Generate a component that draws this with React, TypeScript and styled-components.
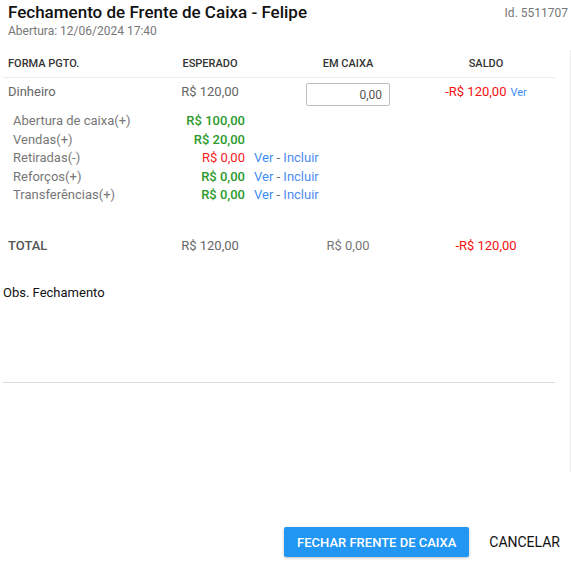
import * as React from "react";
import styled, { createGlobalStyle } from "styled-components";

const Global = createGlobalStyle`
  html, body {
    margin: 0;
    padding: 0;
    background: #fff;
  }
  body {
    font-family: Roboto, "Liberation Sans", sans-serif;
  }
`;

const Dialog = styled.div`
  width: 571px;
  height: 563px;
  display: flex;
  flex-direction: column;
  box-sizing: border-box;
`;

const Head = styled.div`
  height: 22px;
  box-sizing: border-box;
  display: flex;
  justify-content: space-between;
  align-items: flex-start;
  padding: 2px 3px 0 8px;
`;

const Title = styled.h1`
  margin: 0;
  font-size: 17px;
  font-weight: 500;
  line-height: 20px;
  color: #111;
`;

const IdText = styled.span`
  margin-top: 1px;
  font-size: 12px;
  line-height: 20px;
  color: #777;
`;

const Opened = styled.div`
  padding-left: 8px;
  font-size: 12px;
  line-height: 18px;
  color: #777;
`;

const Body = styled.div`
  margin-top: 10px;
  height: 422px;
  box-sizing: border-box;
  padding: 0 15px 0 3px;
  border-right: 1px solid #ececec;
  display: flex;
  flex-direction: column;
`;

const Grid = styled.div`
  display: grid;
  grid-template-columns: repeat(4, 1fr);
`;

const HeadRow = styled(Grid)`
  height: 27px;
  align-items: center;
  border-bottom: 1px solid #ececec;
`;

const HeadCell = styled.div<{ $left?: boolean }>`
  font-size: 11px;
  font-weight: 500;
  color: #333;
  text-align: ${(p) => (p.$left ? "left" : "center")};
  padding-left: ${(p) => (p.$left ? "5px" : "0")};
`;

const Row = styled(Grid)`
  padding-top: 5px;
  align-items: start;
`;

const Cell = styled.div<{ $left?: boolean; $color?: string; $bold?: boolean }>`
  font-size: 13px;
  line-height: 18px;
  color: ${(p) => p.$color || "#666"};
  font-weight: ${(p) => (p.$bold ? 500 : 400)};
  text-align: ${(p) => (p.$left ? "left" : "center")};
  padding-left: ${(p) => (p.$left ? "5px" : "0")};
`;

const InputCell = styled.div`
  display: flex;
  justify-content: center;
`;

const MoneyInput = styled.input`
  width: 84px;
  height: 23px;
  box-sizing: border-box;
  border: 1px solid #bdbdbd;
  border-radius: 2px;
  padding: 0 7px;
  text-align: right;
  font-family: inherit;
  font-size: 12px;
  color: #555;
  outline: none;
`;

const SmallLink = styled.a`
  font-size: 11px;
  color: #3d8ef0;
  margin-left: 4px;
  cursor: pointer;
`;

const Details = styled.div`
  margin-top: 6px;
  padding-left: 10px;
  display: grid;
  grid-template-columns: 162px 61px auto;
  column-gap: 9px;
  font-size: 13px;
  line-height: 18.5px;
`;

const DLabel = styled.span`
  color: #777;
`;

const DValue = styled.span<{ $neg?: boolean }>`
  color: ${(p) => (p.$neg ? "#f52020" : "#2c9a2c")};
  text-align: right;
  font-weight: ${(p) => (p.$neg ? 400 : 500)};
`;

const Actions = styled.span`
  color: #666;
`;

const Link = styled.a<{ $alt?: boolean }>`
  color: ${(p) => (p.$alt ? "#4f8cf2" : "#3d8ef0")};
  cursor: pointer;
`;

const TotalRow = styled(Row)`
  margin-top: 32.5px;
  padding-top: 0;
`;

const ObsLabel = styled.div`
  margin-top: 29px;
  font-size: 13px;
  line-height: 18px;
  color: #111;
`;

const ObsArea = styled.div`
  height: 80px;
  border-bottom: 1px solid #dcdcdc;
`;

const Footer = styled.div`
  margin-top: auto;
  display: flex;
  justify-content: flex-end;
  align-items: center;
  gap: 8px;
  padding: 0 3px 6px 0;
`;

const Primary = styled.button`
  height: 30px;
  width: 185px;
  border: none;
  border-radius: 2px;
  background: #2196f3;
  color: #fff;
  font-family: inherit;
  font-size: 13px;
  font-weight: 500;
  text-transform: uppercase;
  box-shadow: 0 1px 3px rgba(0, 0, 0, 0.25);
  cursor: pointer;
`;

const Flat = styled.button`
  height: 30px;
  padding: 0 8px 0 12px;
  border: none;
  background: transparent;
  color: #111;
  font-family: inherit;
  font-size: 14px;
  text-transform: uppercase;
  cursor: pointer;
`;

const details = [
  { label: "Abertura de caixa(+)", value: "R$ 100,00" },
  { label: "Vendas(+)", value: "R$ 20,00" },
  { label: "Retiradas(-)", value: "R$ 0,00", neg: true, links: true },
  { label: "Reforços(+)", value: "R$ 0,00", links: true },
  { label: "Transferências(+)", value: "R$ 0,00", links: true },
];

export default function App() {
  const red = "#f51010";
  return (
    <Dialog>
      <Global />
      <Head>
        <Title>Fechamento de Frente de Caixa - Felipe</Title>
        <IdText>Id. 5511707</IdText>
      </Head>
      <Opened>Abertura: 12/06/2024 17:40</Opened>
      <Body>
        <HeadRow>
          <HeadCell $left>FORMA PGTO.</HeadCell>
          <HeadCell>ESPERADO</HeadCell>
          <HeadCell>EM CAIXA</HeadCell>
          <HeadCell>SALDO</HeadCell>
        </HeadRow>
        <Row>
          <Cell $left>Dinheiro</Cell>
          <Cell>R$ 120,00</Cell>
          <InputCell>
            <MoneyInput defaultValue="0,00" />
          </InputCell>
          <Cell $color={red}>
            -R$ 120,00<SmallLink>Ver</SmallLink>
          </Cell>
        </Row>
        <Details>
          {details.map((d) => (
            <React.Fragment key={d.label}>
              <DLabel>{d.label}</DLabel>
              <DValue $neg={d.neg}>{d.value}</DValue>
              <Actions>
                {d.links && (
                  <>
                    <Link>Ver</Link> - <Link $alt>Incluir</Link>
                  </>
                )}
              </Actions>
            </React.Fragment>
          ))}
        </Details>
        <TotalRow>
          <Cell $left $bold $color="#555">
            TOTAL
          </Cell>
          <Cell>R$ 120,00</Cell>
          <Cell $color="#777">R$ 0,00</Cell>
          <Cell $color={red}>-R$ 120,00</Cell>
        </TotalRow>
        <ObsLabel>Obs. Fechamento</ObsLabel>
        <ObsArea />
      </Body>
      <Footer>
        <Primary>Fechar frente de caixa</Primary>
        <Flat>Cancelar</Flat>
      </Footer>
    </Dialog>
  );
}
